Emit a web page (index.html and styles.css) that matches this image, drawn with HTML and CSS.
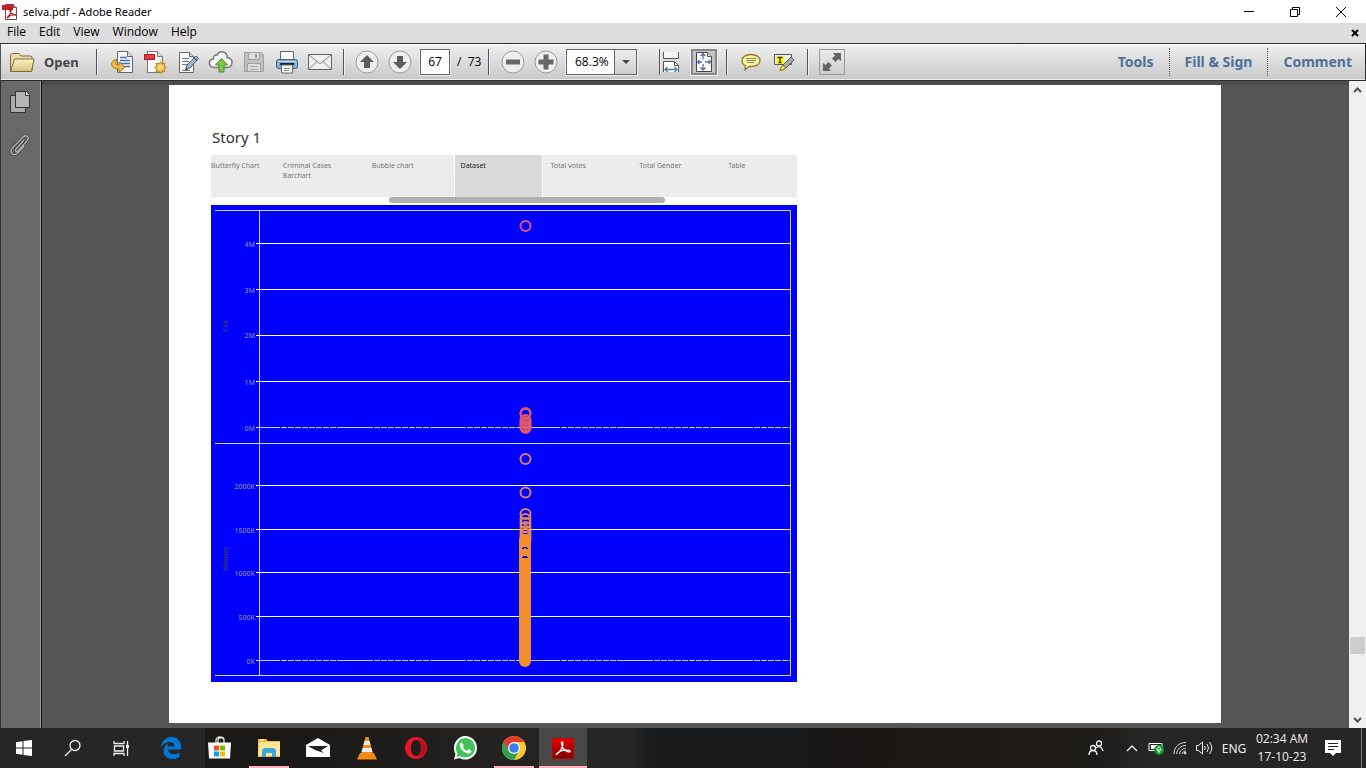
FILE: index.html
```html
<!DOCTYPE html>
<html lang="en">
<head>
<meta charset="utf-8">
<title>selva.pdf - Adobe Reader</title>
<link rel="stylesheet" href="styles.css">
</head>
<body>
<header class="titlebar">
  <svg class="app-icon" width="16" height="16" viewBox="0 0 16 16"><path d="M3.500 .5h8l3 3v12h-11z" fill="#fff" stroke="#8a3a3c"/><path d="M11.500 .5v3h3" fill="#eee" stroke="#8a3a3c"/><rect y="1" width="11" height="5" fill="#c41f26"/><path d="M5 14c2-2 4-6 4-8 0-1-1-1-1 0 0 3 3 5 6 5-3-1-6 0-9 3z" fill="none" stroke="#b8141c" stroke-width="1.300"/></svg>
  <h1 class="window-title">selva.pdf - Adobe Reader</h1>
  <div class="window-controls">
    <button class="win-btn" aria-label="Minimize"><svg width="12" height="12"><path d="M1 5.500h10" stroke="#000"/></svg></button>
    <button class="win-btn" aria-label="Restore"><svg width="12" height="12" fill="none" stroke="#000"><path d="M1.500 3.500h7v7h-7zM3.500 3.500v-2h7v7h-2"/></svg></button>
    <button class="win-btn" aria-label="Close"><svg width="12" height="12"><path d="M1 1l10 10M11 1L1 11" stroke="#000"/></svg></button>
  </div>
</header>

<nav class="menubar" aria-label="Main menu">
  <button class="menu-item">File</button>
  <button class="menu-item">Edit</button>
  <button class="menu-item">View</button>
  <button class="menu-item">Window</button>
  <button class="menu-item">Help</button>
  <button class="menu-close" aria-label="Close document"><svg width="8" height="8"><path d="M1 1l6 6M7 1L1 7" stroke="#000" stroke-width="2"/></svg></button>
</nav>

<div class="toolbar" role="toolbar" aria-label="Document tools">
  <button class="open-btn">
    <svg width="26" height="22" viewBox="0 0 26 22"><defs><linearGradient id="fold" x1="0" y1="0" x2="0" y2="1"><stop offset="0" stop-color="#fdf3c4"/><stop offset="1" stop-color="#d9c279"/></linearGradient></defs><path d="M1.500 20V4l1.500-1.500h7l2 2.500h10l1 1.500V20z" fill="#e9dba6" stroke="#7a6c42"/><path d="M1.500 20.500l4-12.500h19.500l-2.500 12.500z" fill="url(#fold)" stroke="#7a6c42"/></svg>
    <span>Open</span>
  </button>
  <span class="sep"></span>
  <div class="group files">
    <button class="tool" aria-label="Convert"><svg width="24" height="24" viewBox="0 0 24 24"><path d="M7.500 1.500h10l5 5v16h-15z" fill="#f8f8f8" stroke="#666"/><path d="M17.500 1.500v5h5" fill="#ddd" stroke="#666"/><path d="M10 7.500h7M10 10.500h10M10 13.500h10M12 16.500h8" stroke="#3a74b9" stroke-width="1.500"/><path d="M7 9.500C2 10 1 13 2 16c1 2 4 3 7 3v3.500l6-5.500-6-5v3c-3 0-4-1-3-3z" fill="#eebc4e" stroke="#a97518"/></svg></button>
    <button class="tool" aria-label="Create PDF"><svg width="24" height="24" viewBox="0 0 24 24"><path d="M4.500 1.500h10l5 5v16h-15z" fill="#f8f8f8" stroke="#777"/><path d="M14.500 1.500v5h5" fill="#ddd" stroke="#777"/><rect x="1.500" y="4.500" width="10" height="5" fill="#df3f43" stroke="#a91e24"/><path d="M17.500 11.500l1.500 2.500 3-1-1 3 2.500 1.500-2.500 1.500 1 3-3-1-1.500 2.500-1.500-2.500-3 1 1-3-2.500-1.500 2.500-1.500-1-3 3 1z" fill="#f2bd4a" stroke="#bf8a20"/><circle cx="17.500" cy="17.500" r="2.500" fill="#fbd987"/></svg></button>
    <button class="tool" aria-label="Sign"><svg width="24" height="24" viewBox="0 0 24 24"><path d="M3.500 2.500h10l4 4v16h-14z" fill="#f8f8f8" stroke="#666"/><path d="M13.500 2.500v4h4" fill="#ddd" stroke="#666"/><path d="M6 8.500h7M6 11.500h7M6 14.500h5" stroke="#777"/><path d="M20 6l2.500 2.500L14 18l-4.500 2 1.500-5z" fill="#9ebad3" stroke="#435c75"/><path d="M18 8l3 2.500M9.500 20l2-2" stroke="#333"/><path d="M6 20.500h8" stroke="#777"/></svg></button>
    <button class="tool" aria-label="Upload"><svg width="26" height="24" viewBox="0 0 26 24"><path d="M6 17.500C2 17.500 1 14.500 1.500 12S4 9 5.500 9C5 6 7 4.500 9 5c1-3 4-3.500 6-3 3 .5 4.500 3 4 5.500 3 0 5.500 2 5 5.500-.3 3-2 4.500-5 4.500z" fill="#f4f4f4" stroke="#777" stroke-width="1.500"/><path d="M13.500 8.500l6 6.500h-3.500v7h-5v-7H7.500z" fill="#80c74e" stroke="#4a872b"/></svg></button>
    <button class="tool" aria-label="Save" disabled><svg width="22" height="24" viewBox="0 0 22 24"><path d="M1.500 2.500h17l2 2v17h-19z" fill="#c0c0c0" stroke="#a0a0a0"/><path d="M5.500 2.500h11v7h-11zM4.500 13.500h13v8h-13z" fill="#ddd" stroke="#a0a0a0"/><rect x="12" y="4" width="2" height="4" fill="#999"/><path d="M7 16.500h8M7 19.500h8" stroke="#aaa"/></svg></button>
    <button class="tool" aria-label="Print"><svg width="24" height="24" viewBox="0 0 24 24"><path d="M5.500 1.500h13v9h-13z" fill="#fff" stroke="#666"/><rect x="1.500" y="9.500" width="21" height="9" rx="2" fill="#82acd0" stroke="#44647f"/><path d="M3 11.500h18" stroke="#bdd8ec"/><path d="M5 14h14" stroke="#222" stroke-width="2"/><path d="M6.500 15h11v8h-11z" fill="#fff" stroke="#666"/><path d="M9 18.500h6M9 20.500h5" stroke="#888"/></svg></button>
    <button class="tool" aria-label="Email"><svg width="24" height="18" viewBox="0 0 24 18"><path d="M.5 1.500h23v15H.5z" fill="#f0f0f0" stroke="#666"/><path d="M1 2l11 9 11-9M1 16l8-7.500M23 16l-8-7.500" fill="none" stroke="#888"/></svg></button>
  </div>
  <span class="sep"></span>
  <div class="group pages">
    <button class="tool" aria-label="Previous page"><svg width="24" height="24" viewBox="0 0 24 24"><circle cx="12" cy="12" r="11" fill="#eee" stroke="#999"/><path d="M12 5l7 7h-4v6H9v-6H5z" fill="#5c5c5c"/></svg></button>
    <button class="tool" aria-label="Next page"><svg width="24" height="24" viewBox="0 0 24 24"><circle cx="12" cy="12" r="11" fill="#eee" stroke="#999"/><path d="M12 19l7-7h-4V6H9v6H5z" fill="#5c5c5c"/></svg></button>
    <input class="page-input" type="text" value="67" aria-label="Page number">
    <span class="page-total">/&nbsp; 73</span>
  </div>
  <span class="sep"></span>
  <div class="group zoom">
    <button class="tool" aria-label="Zoom out"><svg width="24" height="24" viewBox="0 0 24 24"><circle cx="12" cy="12" r="11" fill="#eee" stroke="#999"/><path d="M5 9.500h14v5H5z" fill="#666"/></svg></button>
    <button class="tool" aria-label="Zoom in"><svg width="24" height="24" viewBox="0 0 24 24"><circle cx="12" cy="12" r="11" fill="#eee" stroke="#999"/><path d="M4.500 9.500h5v-5h5v5h5v5h-5v5h-5v-5h-5z" fill="#666"/></svg></button>
    <div class="zoom-field">
      <select class="zoom-select" aria-label="Zoom level"><option>68.3%</option><option>100%</option></select>
      <span class="zoom-arrow"><svg width="8" height="4"><path d="M0 0h8L4 4z" fill="#444"/></svg></span>
    </div>
  </div>
  <span class="sep"></span>
  <div class="group fit">
    <button class="tool slim" aria-label="Fit width"><svg width="18" height="22" viewBox="0 0 18 22"><path d="M1.500 1v6.500h15V1" fill="#f5f5f5" stroke="#555"/><path d="M1.500 21V10.500h11l4 4V21" fill="#fff" stroke="#555"/><path d="M12.500 10.500v4h4" fill="none" stroke="#555"/><path d="M3 18.500h12M5.500 16L3 18.500 5.500 21M12.500 16l2.500 2.500-2.500 2.500" fill="none" stroke="#5372b0" stroke-width="1.300"/></svg></button>
    <button class="tool pressed" aria-label="Fit page" aria-pressed="true"><svg width="18" height="22" viewBox="0 0 18 22"><path d="M1.500 1.500h11l4 4v15h-15z" fill="#fff" stroke="#444"/><path d="M12.500 1.500v4h4" fill="#ddd" stroke="#555"/><path d="M8 2.500v6M8 13v6M2.500 11H7M10 11h5.500M5.500 5L8 2.500 10.500 5M5.500 16.500L8 19l2.500-2.500M4.500 9L2.500 11l2 2M13.500 9l2 2-2 2" fill="none" stroke="#5372b0" stroke-width="1.300"/></svg></button>
  </div>
  <span class="sep"></span>
  <div class="group notes">
    <button class="tool" aria-label="Add note"><svg width="20" height="18" viewBox="0 0 20 18"><path d="M10 1.500c5 0 9 2.300 9 6s-4 6-9 6l-2 0-4 3.500.5-4.500C2 11.500 1 9.500 1 7.500c0-3.700 4-6 9-6z" fill="#fdf6a1" stroke="#887c34" stroke-width="1.300"/><path d="M5 5.500h10M5 7.500h10M6 9.500h7" stroke="#8d8552"/></svg></button>
    <button class="tool" aria-label="Highlight text"><svg width="22" height="20" viewBox="0 0 22 20"><path d="M1.500 2.500h17v10h-17z" fill="#eee" stroke="#555"/><path d="M3 4h8v8H3z" fill="#ffee25"/><path d="M4.500 5.500h5M7 5.500V11M5.500 10.500h3" stroke="#333" stroke-width="1.300"/><path d="M18 5l3 3-8 8-3-3z" fill="#aaa" stroke="#555"/><path d="M10 13l3 3-3 2-3 .5 1-3z" fill="#f2d931" stroke="#83752b"/></svg></button>
  </div>
  <span class="sep"></span>
  <div class="group screen">
    <button class="tool framed" aria-label="Full screen"><svg width="20" height="20" viewBox="0 0 20 20"><path d="M19 1v8l-2.500-2-3 3-3.500-3.500 3-3L11 1zM1 19v-8l2.500 2 3-3L10 13.500l-3 3L9 19z" fill="#666"/></svg></button>
  </div>
  <div class="panes">
    <button class="pane-btn">Tools</button>
    <button class="pane-btn">Fill &amp; Sign</button>
    <button class="pane-btn">Comment</button>
  </div>
</div>

<div class="workspace">
  <aside class="sidebar">
    <button class="side-btn" aria-label="Page thumbnails"><svg width="22" height="24" viewBox="0 0 22 24"><path d="M1.500 5.500h15v17h-15z" fill="#aaa" stroke="#333"/><path d="M6.500 1.500h11l3 3v13h-14z" fill="#b5b5b5" stroke="#333"/><path d="M16.500 1.500v4h4" fill="#ddd" stroke="#444"/></svg></button>
    <button class="side-btn" aria-label="Attachments"><svg width="22" height="24" viewBox="0 0 22 24"><path d="M15 7l-8 9c-1.500 2 .5 3.500 2 2L18 8c3-3.500-.5-7-4-4L3.500 15c-4 4.500 1.500 9 5 5L15 13" fill="none" stroke="#444" stroke-width="3"/><path d="M15 7l-8 9c-1.500 2 .5 3.500 2 2L18 8c3-3.500-.5-7-4-4L3.500 15c-4 4.500 1.500 9 5 5L15 13" fill="none" stroke="#b5b5b5" stroke-width="1.300"/></svg></button>
  </aside>
  <main class="viewer">
    <article class="page">
      <section class="story">
        <h2 class="story-title">Story 1</h2>
        <div class="story-tabs">
          <button class="story-tab first">Butterfly Chart</button>
          <button class="story-tab">Criminal Cases Barchart</button>
          <button class="story-tab">Bubble chart</button>
          <button class="story-tab active">Dataset</button>
          <button class="story-tab">Total votes</button>
          <button class="story-tab">Total Gender</button>
          <button class="story-tab last">Table</button>
        </div>
        <div class="story-scroll"><div class="story-thumb"></div></div>
        <svg class="chart" viewBox="0 0 586 477" role="img" aria-label="F16 and Winner values">
          <rect width="586" height="477" fill="#00f"/>
          <g stroke="#fff" fill="none">
            <path d="M45 38.500H579M45 84.500H579M45 130.500H579M45 176.500H579M45 280.500H579M45 324.500H579M45 367.500H579M45 411.500H579"/>
            <path d="M45 222.500H579M45 455.500H579" stroke="#c8c8f0"/>
          </g>
          <path class="zero-ticks" d="M69 222.500h57M162 222.500h57M255 222.500h57M349 222.500h57M442 222.500h57M542 222.500h36M69 455.500h57M162 455.500h57M255 455.500h57M349 455.500h57M442 455.500h57M542 455.500h36"/>
          <path d="M4 5.500H579.500V470.500H4M4 238.500H579M48.500 5V470" fill="none" stroke="#d2d2d8"/>
          <g class="axis-label">
            <text x="44" y="42">4M</text><text x="44" y="88">3M</text><text x="44" y="133">2M</text><text x="44" y="180">1M</text><text x="44" y="226">0M</text>
            <text x="44" y="284">2000K</text><text x="44" y="328">1500K</text><text x="44" y="371">1000K</text><text x="44" y="415">500K</text><text x="44" y="459">0K</text>
          </g>
          <g class="axis-title">
            <text transform="translate(17 121) rotate(-90)">F16</text>
            <text transform="translate(17 354) rotate(-90)">Winner</text>
          </g>
          <g class="mark-red">
            <circle cx="314.500" cy="21" r="5"/><circle cx="314.500" cy="208" r="5"/><circle cx="314.500" cy="209" r="5"/><circle cx="314.500" cy="215" r="5"/><circle cx="314.500" cy="217" r="5"/><circle cx="314.500" cy="219" r="5"/><circle cx="314.500" cy="221" r="5"/><circle cx="314.500" cy="222" r="5"/><circle cx="314.500" cy="223" r="5"/>
          </g>
          <g class="mark-orange">
            <circle cx="314.500" cy="254" r="5"/><circle cx="314.500" cy="287.500" r="5"/><circle cx="314.500" cy="309" r="5"/><circle cx="314.500" cy="314" r="5"/><circle cx="314.500" cy="318" r="5"/><circle cx="314.500" cy="322" r="5"/><circle cx="314.500" cy="326" r="5"/><circle cx="314.500" cy="329" r="5"/><circle cx="314.500" cy="332" r="5"/><circle cx="314.500" cy="335" r="5"/>
          </g>
          <path d="M314 335V456" stroke="#f28e2b" stroke-width="12" stroke-linecap="round"/>
          <path d="M311 343.500h2M315 343.500h2M312 342.500h4M311 352.500h2M313 352.500h4M312 351.500h4" stroke="#00f"/>
        </svg>
      </section>
    </article>
  </main>
  <div class="scrollbar">
    <svg width="9" height="8"><path d="M1 6l3.500-3.500L8 6" fill="none" stroke="#505050" stroke-width="2"/></svg>
    <div class="scroll-thumb"></div>
    <svg width="9" height="8"><path d="M1 2l3.500 3.500L8 2" fill="none" stroke="#505050" stroke-width="2"/></svg>
  </div>
</div>

<footer class="taskbar">
  <div class="apps">
    <button class="app" aria-label="Start"><svg width="16" height="16"><path d="M0 2.200l6.500-1v6.300H0zM7.500 1L16 0v7.500H7.500zM0 8.500h6.500v6.300l-6.500-1zM7.500 8.500H16V16l-8.500-1z" fill="#fff"/></svg></button>
    <button class="app" aria-label="Search"><svg width="18" height="18" fill="none" stroke="#eee" stroke-width="1.300"><circle cx="11" cy="6.500" r="5"/><path d="M7.500 10.500L1 17"/></svg></button>
    <button class="app" aria-label="Task view"><svg width="18" height="17" fill="none" stroke="#eee" stroke-width="1.300"><path d="M1 1v2.500h10V1M1 16v-2.500h10V16M1.500 6h9v5h-9zM14.500 1v15"/><path d="M13 5h3v3h-3z" fill="#eee" stroke="none"/></svg></button>
    <button class="app" aria-label="Edge"><svg width="20" height="22" viewBox="0 0 20 22"><path d="M0 10C1 4 5 0 10.500 0 17 0 20 5 20 10v2.500H7c.3 5 7 6 11.500 3v4.500C12 24 2.500 21.500 2.500 14c0-3.500 2-6 5-7.500-.7 1-1 2-1 3h7c0-6-8.500-6-13.500 .5z" fill="#0078d7"/></svg></button>
    <button class="app" aria-label="Store"><svg width="24" height="24" viewBox="0 0 24 24"><path d="M8 7V4c0-4 8-4 8 0v3M10 7V4c0-3 6-3 6 0" fill="none" stroke="#ddd" stroke-width="1.300"/><path d="M0 6.500h23l-1 16H1z" fill="#fff"/><path d="M6 9.500h5v5H6z" fill="#f25022"/><path d="M12 9.500h5v5h-5z" fill="#7fba00"/><path d="M6 15.500h5v5H6z" fill="#00a4ef"/><path d="M12 15.500h5v5h-5z" fill="#ffb900"/></svg></button>
    <button class="app running" aria-label="File Explorer"><svg width="22" height="20" viewBox="0 0 22 20"><path d="M0 1h8l2 2h12v16H0z" fill="#f0b93b"/><path d="M1 4h21v14H0z" fill="#ffe695"/><path d="M4 19v-7l2-2h10l2 2v7h-4v-4H8v4z" fill="#37a9df"/><path d="M2 2h4" stroke="#fff"/></svg></button>
    <button class="app" aria-label="Mail"><svg width="24" height="20" viewBox="0 0 24 20"><path d="M0 7L12 0l12 7v12H0z" fill="#fff"/><path d="M2 8h20l-7 4.500 3 2.500L9 12z" fill="#222"/></svg></button>
    <button class="app" aria-label="VLC"><svg width="20" height="23" viewBox="0 0 20 23"><path d="M3 16h14l3 6.500H0z" fill="#f08a13"/><path d="M8.500 0h3L16 17c-3 2-9 2-12 0z" fill="#f28c1b"/><path d="M7.500 4h5l1.100 4H6.400zM5.600 11h8.800l1.100 4H4.500z" fill="#e8edf2"/></svg></button>
    <button class="app" aria-label="Opera"><svg width="22" height="22" viewBox="0 0 22 22"><path fill-rule="evenodd" d="M11 0a11 11 0 100 22 11 11 0 100-22zm0 3c3 0 5 3 5 8s-2 8-5 8-5-3-5-8 2-8 5-8z" fill="#e8142b"/><path d="M12 2c6 0 6 18 0 18 12 0 12-17 0-18z" fill="#b40e1e"/></svg></button>
    <button class="app" aria-label="WhatsApp"><svg width="24" height="24" viewBox="0 0 24 24"><path d="M1 23.500L2.500 18C-2 10 4 0 12 0c7 0 12 5 12 12 0 9-10 14.500-17.500 10z" fill="#fff"/><path d="M3.500 21l1-3.500C.5 11 5 2 12 2c6 0 10 4.500 10 10 0 7.500-8.500 12-15 8z" fill="#42c45a"/><path d="M8.500 6L7 7.500c-1.500 4 4.500 10.500 9 10 2-.3 2.500-2 2.300-3L15.500 13 14 15c-2-.8-3.500-2.500-4-4l1-1.500z" fill="#fff"/></svg></button>
    <button class="app running" aria-label="Chrome"><svg width="24" height="24" viewBox="0 0 24 24"><circle cx="12" cy="12" r="12" fill="#fcc934"/><path d="M12 12L1.600 6A12 12 0 0012 24l5-9z" fill="#28a350"/><path d="M1.600 6a12 12 0 0120.800 0H12l-5 9z" fill="#e33b2e"/><circle cx="12" cy="12" r="6" fill="#fff"/><circle cx="12" cy="12" r="4.800" fill="#367ff0"/></svg></button>
    <button class="app current" aria-label="Adobe Reader"><svg width="22" height="21" viewBox="0 0 22 21"><defs><linearGradient id="acro" x1="0" y1="0" x2="0" y2="1"><stop offset="0" stop-color="#e60000"/><stop offset="1" stop-color="#7e0000"/></linearGradient></defs><rect x=".5" y=".5" width="21" height="20" rx="1" fill="url(#acro)" stroke="#c50000"/><path d="M5 16c3-2 6-7 6-10 0-3-2-3-1.500 0C10 10 14 14 17 14c2.500 0 1-2-2-1.800C11 12 7 13.500 5 15.500s0 1 0 .5z" fill="none" stroke="#fff" stroke-width="1.200"/></svg></button>
  </div>
  <div class="tray">
    <button class="tray-btn people" aria-label="People"><svg width="16" height="16" fill="none" stroke="#eee" stroke-width="1.300"><circle cx="5" cy="8" r="2.500"/><circle cx="11" cy="3.500" r="2.500"/><path d="M1 15c0-6 8-6 8 0M8 8c3-3 6-1 7 3"/></svg></button>
    <button class="tray-btn" aria-label="Show hidden icons"><svg width="12" height="8"><path d="M1 7l5-5 5 5" fill="none" stroke="#eee" stroke-width="1.300"/></svg></button>
    <button class="tray-btn" aria-label="Battery"><svg width="16" height="14"><path d="M1 2.500h13v7H1z" fill="none" stroke="#fff"/><path d="M3 4h7v4H3z" fill="#fff"/><circle cx="11" cy="9" r="5" fill="#119b2b"/><path d="M11 5.500c3 2 2 5 0 5s-3-3 0-5zM11 8v4" stroke="#fff" fill="none"/></svg></button>
    <button class="tray-btn" aria-label="Network"><svg width="14" height="14" fill="none" stroke="#ddd"><path d="M1 13C1 6 6 1.500 13 1.500M3.500 13C4 8 8 4.500 13 4.500M6.500 13c0-3 3-5.500 6.500-5.500M9 13c0-1.500 2-3 4-3"/><circle cx="12" cy="12" r="1" fill="#fff"/></svg></button>
    <button class="tray-btn" aria-label="Volume"><svg width="18" height="14" fill="none" stroke="#eee"><path d="M1.500 4.500h2l4-3.500v12l-4-3.500h-2z"/><path d="M9.500 5q1.500 2 0 4M12 3q3 4 0 8M14.500 1q4.500 6 0 12"/></svg></button>
    <button class="tray-btn lang">ENG</button>
    <button class="clock"><time>02:34 AM</time><time>17-10-23</time></button>
    <button class="tray-btn notify" aria-label="Notifications"><svg width="16" height="16"><path d="M0 0h16v13h-5l-3 3-3-3H0z" fill="#fff"/><path d="M3 3.500h10M3 6.500h10M3 9.500h6" stroke="#222"/></svg></button>
    <button class="desktop-edge" aria-label="Show desktop"></button>
  </div>
</footer>
</body>
</html>
```
FILE: styles.css
```css
* { box-sizing: border-box; }

body {
  margin: 0;
  height: 100vh;
  display: flex;
  flex-direction: column;
  overflow: hidden;
  background: #565656;
  font-family: "Noto Sans", "Open Sans", sans-serif;
  font-size: 12px;
  color: #000;
}

button {
  display: flex;
  align-items: center;
  justify-content: center;
  margin: 0;
  padding: 0;
  border: 0;
  background: none;
  color: inherit;
  font: inherit;
}

svg { display: block; flex: none; }

/* Title bar */
.titlebar {
  display: flex;
  align-items: center;
  height: 23px;
  padding-left: 2px;
  background: #fff;
}
.window-title {
  margin: 0 auto 0 5px;
  font-size: 11px;
  font-weight: 400;
}
.window-controls { display: flex; height: 20px; padding-right: 2px; }
.win-btn { width: 46px; }

/* Menu bar */
.menubar {
  display: flex;
  align-items: center;
  gap: 13px;
  height: 20px;
  padding: 0 7px;
  background: #ddd;
}
.menu-item { font-family: "Open Sans", sans-serif; line-height: 18px; padding-bottom: 2px; }
.menu-close { margin-left: auto; }

/* Toolbar */
.toolbar {
  display: flex;
  align-items: center;
  height: 38px;
  padding-bottom: 1px;
  border: 1px solid #2b2b2b;
  border-left-color: #555;
  box-shadow: inset 0 1px #fff, inset 0 -1px #eee;
  background: linear-gradient(#f0f0f0, #c8c8c8);
}
.open-btn {
  width: 95px;
  justify-content: flex-start;
  padding-left: 8px;
  gap: 9px;
  font-size: 13px;
  font-weight: 700;
  color: #444;
}
.sep {
  width: 2px;
  height: 26px;
  border-left: 1px solid #555;
  border-right: 1px solid #eee;
}
.group { display: flex; align-items: center; gap: 7px; }
.tool { width: 26px; height: 26px; }
.tool.slim { width: 20px; }
.files { padding: 0 10px 0 11px; }
.pages { width: 143px; padding-left: 9px; }
.zoom { width: 169px; padding-left: 10px; }
.fit { gap: 10px; padding-right: 9px; }
.notes { padding: 0 10px; }
.screen { padding-left: 10px; }
.pressed { border: 2px solid #888; background: #c6c6c8; box-shadow: 0 0 0 1px #eee; }
.framed { border: 1px solid #999; }
.page-input,
.zoom-select {
  height: 26px;
  border: 1px solid #666;
  border-radius: 0;
  background: #fff;
  color: #000;
  font: 12px "Open Sans", sans-serif;
}
.page-input { width: 30px; padding: 0; text-align: center; box-shadow: 0 0 0 1px #eee; }
.page-total { font-family: "Open Sans", sans-serif; white-space: nowrap; }
.zoom-field { position: relative; width: 71px; }
.zoom-select { width: 100%; padding: 0 8px; appearance: none; box-shadow: 0 0 0 1px #eee; }
.zoom-arrow {
  position: absolute;
  top: 1px;
  right: 1px;
  bottom: 1px;
  width: 22px;
  display: flex;
  align-items: center;
  justify-content: center;
  border-left: 1px solid #666;
  background: linear-gradient(#eee, #ccc);
  pointer-events: none;
}
.panes { display: flex; margin-left: auto; }
.pane-btn {
  height: 28px;
  padding: 0 15px;
  border-left: 1px dotted #555;
  color: #4f6f9b;
  font-size: 14px;
  font-weight: 700;
}
.pane-btn:first-child { border-left: 0; }
.pane-btn:last-child { padding-right: 13px; }

/* Workspace */
.workspace { flex: 1; min-height: 0; display: flex; }
.sidebar {
  width: 42px;
  display: flex;
  flex-direction: column;
  align-items: center;
  gap: 19px;
  padding: 9px 3px 0 0;
  border-left: 1px solid #333;
  border-right: 1px solid #111;
  box-shadow: inset -1px 0 #999;
  background: #696969;
}
.viewer {
  flex: 1;
  display: flex;
  padding: 4px 128px 5px 127px;
  background: #565656;
  box-shadow: inset 0 4px #4c4c4c;
}
.page { flex: 1; padding: 42px; background: #fff; }
.story { width: 586px; }
.story-title {
  margin: 0 0 8px;
  padding-left: 1px;
  color: #333;
  font-size: 15px;
  font-weight: 400;
  line-height: 20px;
}
.story-tabs { display: flex; height: 42px; background: #ececec; }
.story-tab {
  width: 89px;
  align-items: flex-start;
  justify-content: flex-start;
  padding: 6px 24px 0 6px;
  border: solid transparent;
  border-width: 0 1px;
  color: #777;
  font-size: 7px;
  line-height: 10px;
  text-align: left;
}
.story-tab.first { width: 65px; padding: 6px 0 0; border-width: 0; white-space: nowrap; }
.story-tab.last { width: 76px; }
.story-tab.active { width: 90px; background: #dadada; border-color: #fff; color: #222; }
.story-scroll { display: flex; height: 8px; padding: 0 132px 0 178px; }
.story-thumb { flex: 1; height: 6px; border-radius: 3px; background: #b0b0b0; }

/* Chart */
.chart { width: 100%; height: auto; font-family: "Noto Sans", sans-serif; font-size: 7px; font-weight: 500; }
.axis-label { fill: #8080a8; text-anchor: end; }
.axis-title { fill: #3c3c58; text-anchor: middle; font-weight: 600; }
.zero-ticks { stroke: #000030; stroke-dasharray: 1 6; }
.mark-red { fill: none; stroke: #e15769; stroke-width: 2; }
.mark-orange { fill: none; stroke: #f28e4b; stroke-width: 2; stroke-opacity: .9; }

/* Vertical scroll bar */
.scrollbar {
  width: 17px;
  display: flex;
  flex-direction: column;
  align-items: center;
  padding: 5px 0 4px;
  background: #f0f0f0;
}
.scroll-thumb { width: 15px; height: 17px; margin: auto 0 62px; background: #cdcdcd; }

/* Taskbar */
.taskbar {
  display: flex;
  justify-content: space-between;
  height: 40px;
  background: linear-gradient(90deg, #262626 15%, #1b1918 15% 22%, #22211f 35%, #272727 46%, #181a1c 48%, #17191b 58%, #1c1715 63%, #1d1b18 80%, #262626 84%);
  color: #eee;
}
.apps { display: flex; gap: 1px; }
.app { width: 48px; }
.app.running { background: linear-gradient(#ffb3c0, #ffb3c0) center bottom / 40px 2px no-repeat; }
.app.current { background: #484848; box-shadow: inset 0 -2px #ffb3c0; }
.tray { display: flex; align-items: stretch; }
.tray-btn { width: 24px; }
.people { margin-right: 12px; }
.lang { width: 36px; }
.clock {
  width: 60px;
  margin-right: 9px;
  flex-direction: column;
  line-height: 18px;
  font-family: "Open Sans", sans-serif;
  font-size: 12px;
  white-space: nowrap;
}
.desktop-edge { width: 5px; margin-left: 16px; border-left: 1px solid #777; }
```
